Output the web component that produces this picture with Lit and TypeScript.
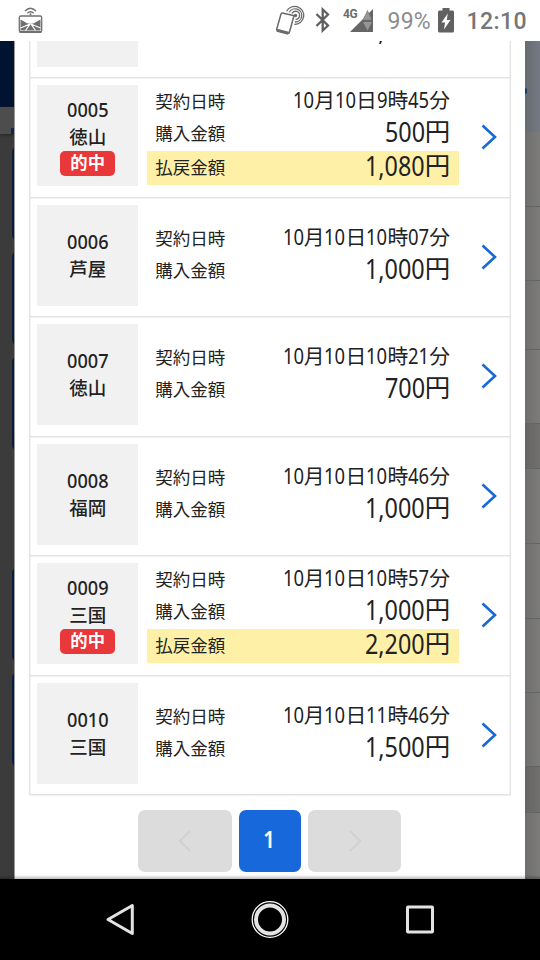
import { LitElement, html, css } from "lit";
import { customElement, property } from "lit/decorators.js";

interface Entry {
  no?: string;
  venue?: string;
  time?: string;
  paid: string;
  payout?: string;
}

// The first entry is scrolled almost fully out of the dialog.
const ENTRIES: Entry[] = [
  { paid: "1,000円" },
  { no: "0005", venue: "徳山", time: "10月10日9時45分", paid: "500円", payout: "1,080円" },
  { no: "0006", venue: "芦屋", time: "10月10日10時07分", paid: "1,000円" },
  { no: "0007", venue: "徳山", time: "10月10日10時21分", paid: "700円" },
  { no: "0008", venue: "福岡", time: "10月10日10時46分", paid: "1,000円" },
  { no: "0009", venue: "三国", time: "10月10日10時57分", paid: "1,000円", payout: "2,200円" },
  { no: "0010", venue: "三国", time: "10月10日11時46分", paid: "1,500円" },
];

// Splits a value into kanji and narrow numeral runs.
const runs = (text: string) =>
  (text.match(/[\d,]+|[^\d,]+/g) ?? []).map((part) => {
    if (!/\d/.test(part)) return html`<span class="kanji">${part}</span>`;
    const em = [...part].reduce((sum, c) => sum + (c === "," ? 0.268 : 0.572), 0);
    return html`<span class="num" style="--w:${em.toFixed(3)}"><span class="squeeze">${part}</span></span>`;
  });

@customElement("status-bar")
class StatusBar extends LitElement {
  static styles = css`
    :host { display: flex; align-items: flex-start; height: 40.5px; background: #fff; color: #6b6b6b;
      font-family: Roboto, sans-serif; position: relative; z-index: 2; }
    svg { display: block; flex: none; }
    .cast { margin: 6px 0 0 17px; }
    .right { margin-left: auto; display: flex; align-items: flex-start; padding-right: 14.5px; }
    .phone { margin-top: 5px; width: 31px; }
    .bt { margin: 7px 0 0 10px; }
    .net { display: flex; margin-left: 12px; }
    .gen { font-size: 13px; font-weight: 700; line-height: 15px; margin-top: 6px; width: 16px; letter-spacing: -.4px;
      transform: scaleX(.92); transform-origin: 0 0; }
    .sig { margin: 9px 0 0 -9px; }
    .pct { font-size: 23px; line-height: 28px; margin: 8px 0 0 14px; width: 44px; color: #8c8c8c; white-space: nowrap; letter-spacing: .2px; }
    .bat { margin: 8px 0 0 6px; }
    .clock { font-size: 23px; line-height: 28px; margin: 8px 0 0 13px; width: 59px; font-weight: 500; color: #767676; white-space: nowrap; letter-spacing: .45px; }
  `;
  render() {
    return html`
      <svg class="cast" width="28" height="28" viewBox="0 0 28 28" fill="none" stroke="#707070">
        <path d="M8 5Q13.500 -.5 19 5M10.300 7.200Q13.500 4.200 16.700 7.200" stroke-width="1.400" />
        <circle cx="13.500" cy="8.300" r="1" fill="#707070" stroke="none" />
        <rect x="2.300" y="10" width="22.400" height="16" rx="1.500" stroke-width="1.300" />
        <path d="M2.500 26H24.500" stroke-width="2" />
        <path d="M3.500 13.500L10.500 17.500H16.500L23.500 13.500V24.500H3.500Z" fill="#707070" stroke="none" />
        <path d="M3.500 22L13 18L8.500 24.500M14 18L18.500 24.500M14 18L23.500 22" stroke="#fff" stroke-width="1.200" />
      </svg>
      <div class="right">
        <svg class="phone" width="31" height="32" viewBox="0 0 31 32" fill="none" stroke="#6b6b6b">
          <path d="M8.300 8L19.300 10.500Q20 10.700 19.800 11.500L15.300 27.500Q15 28.500 14 28.300L3.500 25.700Q2.400 25.300 2.700 24.300L7 9Q7.300 7.800 8.300 8Z" stroke-width="1.500" />
          <path d="M2.900 25.300L14.500 28.300" stroke-width="3.200" />
          <circle cx="21.500" cy="10.500" r="1.700" fill="#6b6b6b" stroke="none" />
          <path d="M18 8.500A4 4 0 1 1 21.600 14.300M15.300 7.300A6.600 6.600 0 1 1 21 17M12.700 6.300A9 9 0 1 1 20.300 19.300" stroke-width="1.300" />
        </svg>
        <svg class="bt" width="16" height="26" viewBox="0 0 16 26" fill="none" stroke="#5f5f5f" stroke-width="2.300">
          <path d="M1.500 7L13 18.500L7.700 23.500V2.500L13 7.500L1.500 19" />
        </svg>
        <div class="net">
          <span class="gen">4G</span>
          <svg class="sig" width="24" height="24" viewBox="0 0 24 24">
            <path d="M0 23L23 0V23Z" fill="#666" />
            <path d="M13 11L17.500 1.500L22 11Z" fill="#969696" stroke="#777" stroke-width=".6" />
            <path d="M13 13L22 13L17.500 21.500Z" fill="#969696" />
          </svg>
        </div>
        <span class="pct">99%</span>
        <svg class="bat" width="16" height="25" viewBox="0 0 16 25">
          <path d="M4.500 0H11.500V2.500H14.500Q16 2.500 16 4V23Q16 24.500 14.500 24.500H1.500Q0 24.500 0 23V4Q0 2.500 1.500 2.500H4.500Z" fill="#616161" />
          <path d="M9.800 5.500L3.500 14.500H7L6 21.500L12.500 12H8.800Z" fill="#fff" />
        </svg>
        <span class="clock">12:10</span>
      </div>`;
  }
}

@customElement("bet-row")
class BetRow extends LitElement {
  @property({ attribute: false }) entry!: Entry;
  static styles = css`
    :host { display: flex; box-sizing: border-box; height: 119.5px; border-bottom: 1px solid #e3e3e3;
      box-shadow: 0 1px 0 #f1f1f1; padding: 7px 0 0 7px; color: #222; font-family: "Noto Sans CJK JP", sans-serif; }
    .tile { width: 101px; height: 101px; background: #f1f1f1; display: flex; flex-direction: column;
      align-items: center; justify-content: center; flex: none; font-weight: 500; }
    .no { font-size: 20.500px; line-height: 27px; --s: .885; transform: translateY(-1.500px); }
    .venue { font-size: 18.500px; line-height: 27px; transform: translateY(-1.500px); }
    .hit { width: 55px; height: 25px; border-radius: 5px; background: #e83839; color: #fff; text-align: center;
      font-size: 17.300px; line-height: 22px; font-weight: 700; }
    .info { width: 312px; height: 101px; margin-left: 9px; display: flex; flex-direction: column; justify-content: center; flex: none; }
    .line { display: flex; justify-content: space-between; align-items: center; height: 32px; padding: 0 9px 0 8px; }
    .pay { background: #fff0a8; height: 34px; margin-top: 1px; }
    .label { font-size: 17.500px; line-height: 32px; margin-top: -3px; }
    .num { display: inline-block; width: calc(var(--w) * var(--s) * 1em); font-family: "Noto Sans", sans-serif; }
    .squeeze { display: inline-block; transform: scaleX(var(--s)); transform-origin: 0 50%; white-space: nowrap; }
    .time, .sum { display: flex; align-items: baseline; line-height: 32px; white-space: nowrap; margin: -6px 0 0 auto; }
    .time { --s: .82; font-size: 22.500px; }
    .time .kanji { font-size: 20.800px; }
    .sum { --s: .865; font-size: 27px; }
    .sum .kanji { font-size: 25.500px; transform: translateY(-1px); }
    .arrow { margin: 37.700px 0 0 21px; display: block; }
  `;
  render() {
    const e = this.entry;
    return html`
      <div class="tile">
        ${e.no ? html`<div class="no">${runs(e.no)}</div><div class="venue">${e.venue}</div>` : ""}
        ${e.payout ? html`<div class="hit">的中</div>` : ""}
      </div>
      <div class="info">
        <div class="line">${e.time ? html`<span class="label">契約日時</span><span class="time">${runs(e.time)}</span>` : ""}</div>
        <div class="line">${e.time ? html`<span class="label">購入金額</span>` : ""}<span class="sum">${runs(e.paid)}</span></div>
        ${e.payout
          ? html`<div class="line pay"><span class="label">払戻金額</span><span class="sum">${runs(e.payout)}</span></div>`
          : ""}
      </div>
      <svg class="arrow" width="20" height="28" viewBox="0 0 20 28" fill="none" stroke="#1769db" stroke-width="2.600">
        <path d="M2.500 2.500L15 14L2.500 25.500" />
      </svg>`;
  }
}

@customElement("page-left")
class PageLeft extends LitElement {
  static styles = css`
    :host { display: block; width: 14.400px; overflow: hidden; background: #3b3b3b; flex: none; }
    .head { height: 66px; background: #001432; }
    .tabs { height: 27px; background: #4d4d4d; display: flex; align-items: flex-end; justify-content: flex-end;
      box-shadow: 0 1px 3px #222; }
    .mark { width: 3px; height: 6px; background: #06285c; }
    .cards { padding: 12px 0 0 12px; display: flex; flex-direction: column; gap: 10px; }
    .card { box-sizing: border-box; width: 60px; height: 95px; border: 2px solid #071d3f; border-radius: 6px; background: #6b6864; }
    .late { margin-top: 106px; }
  `;
  render() {
    return html`<div class="head"></div><div class="tabs"><div class="mark"></div></div>
      <div class="cards">
        <div class="card"></div><div class="card"></div><div class="card"></div>
        <div class="card late"></div><div class="card"></div>
      </div>`;
  }
}

@customElement("page-right")
class PageRight extends LitElement {
  static styles = css`
    :host { display: block; flex: 1; overflow: hidden; background: linear-gradient(90deg, #6e6e6e, #7d7c7b); }
    .head { height: 91.500px; background: linear-gradient(90deg, #666b72, #747983); display: flex; align-items: center; }
    .mark { width: 1.500px; height: 6px; margin-top: 10px; border-radius: 0 3px 3px 0; background: #123c78; }
    .row { box-sizing: border-box; border-bottom: 1px solid #646464; }
    .dark { background: #00000016; }
  `;
  render() {
    const rows = [[75, 0], [74, 0], [68.5, 0], [74.5, 0], [45, 1], [75, 0], [74.5, 0], [74, 0], [74.5, 0], [46, 1]];
    return html`<div class="head"><div class="mark"></div></div>
      ${rows.map(([h, d]) => html`<div class="row ${d ? "dark" : ""}" style="height:${h}px"></div>`)}`;
  }
}

@customElement("app-root")
class AppRoot extends LitElement {
  static styles = css`
    :host { display: flex; flex-direction: column; width: 540px; height: 960px; overflow: hidden; background: #fff; }
    .main { display: flex; height: 838.500px; overflow: hidden; position: relative; flex: none; }
    .shade { position: absolute; inset: auto 0 0 0; height: 4px; background: linear-gradient(#0000, #0004); }
    .dialog { width: 511px; box-sizing: border-box; flex: none; background: #fff; overflow: hidden; display: flex;
      flex-direction: column; align-items: center; box-shadow: inset 1px 0 0 #999; }
    .list { width: 481.500px; box-sizing: border-box; border: solid #e3e3e3; border-width: 0 1px; margin-top: -81.700px; flex: none;
      box-shadow: inset 1px 0 0 #f3f3f3, inset -1px 0 0 #f3f3f3; }
    .pager { display: flex; gap: 7px; margin-top: 14.700px; }
    .page { width: 93.500px; height: 62px; border-radius: 7px; background: #dcdcdc; display: flex; align-items: center; justify-content: center; }
    .current { width: 62px; background: #1769db; color: #fff; font: 600 24px/30px "Noto Sans", sans-serif; }
    .glyph { transform: scaleX(.85) translate(-1px, -2px); }
    .nav { flex: 1; background: #000; display: flex; justify-content: center; }
    .nav svg { display: block; }
  `;
  render() {
    return html`
      <status-bar></status-bar>
      <div class="main">
        <page-left></page-left>
        <div class="dialog">
          <div class="list">${ENTRIES.map((e) => html`<bet-row .entry=${e}></bet-row>`)}</div>
          <div class="pager">
            <div class="page">
              <svg width="16" height="24" viewBox="0 0 16 24" fill="none" stroke="#d1d1d1" stroke-width="2"><path d="M13 2L3 12L13 22" /></svg>
            </div>
            <div class="page current"><span class="glyph">1</span></div>
            <div class="page">
              <svg width="16" height="24" viewBox="0 0 16 24" fill="none" stroke="#d1d1d1" stroke-width="2"><path d="M3 2L13 12L3 22" /></svg>
            </div>
          </div>
        </div>
        <page-right></page-right>
        <div class="shade"></div>
      </div>
      <div class="nav">
        <svg width="540" height="81" viewBox="0 0 540 81" fill="none" stroke="#e3e3e3" stroke-width="3">
          <path d="M132.300 26.500V54.500L108 40.500Z" stroke-linejoin="round" />
          <circle cx="270" cy="40.500" r="14" stroke-width="4" />
          <circle cx="270" cy="40.500" r="17.800" stroke-width="1.300" stroke="#fff" />
          <rect x="407.500" y="28" width="25" height="25" rx=".5" stroke-linejoin="round" />
        </svg>
      </div>`;
  }
}
